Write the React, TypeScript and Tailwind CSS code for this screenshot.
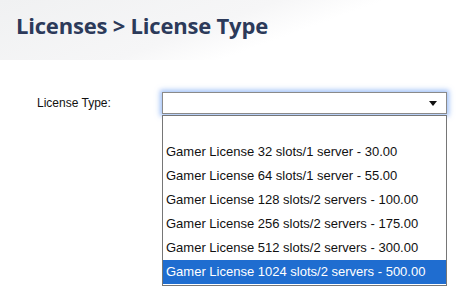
import { useState } from 'react'

const options = [
  '',
  'Gamer License 32 slots/1 server - 30.00',
  'Gamer License 64 slots/1 server - 55.00',
  'Gamer License 128 slots/2 servers - 100.00',
  'Gamer License 256 slots/2 servers - 175.00',
  'Gamer License 512 slots/2 servers - 300.00',
  'Gamer License 1024 slots/2 servers - 500.00',
]

const App = () => {
  const [active] = useState(6)

  return (
    <div className="relative h-[292px] w-[457px] overflow-hidden bg-white font-['Liberation_Sans',Arial,sans-serif]">
      {/* header band */}
      <div className="h-[60px] bg-[linear-gradient(160deg,#f0f1f2_0%,#f6f6f7_45%,#ffffff_62%,#ffffff_100%)] pl-4 pt-[7px]">
        <h1 className="font-['Open_Sans',sans-serif] text-[22px] font-bold leading-[36px] tracking-[-0.2px] text-[#2c3a5a]">
          Licenses &gt; License Type
        </h1>
      </div>

      {/* form row */}
      <div className="mt-[32px] flex items-center">
        <label className="w-[162px] pl-[37px] text-[12px] text-[#111]">License Type:</label>
        <div className="relative">
          <div className="flex h-[22px] w-[285px] items-center justify-end border border-[#8a8a8a] bg-white pr-[9px] shadow-[0_0_5px_2px_rgba(80,140,240,0.55)]">
            <svg width="8" height="5" viewBox="0 0 8 5">
              <path d="M0 0h8L4 5z" fill="#111" />
            </svg>
          </div>
          {/* open list */}
          <ul className="absolute left-0 top-[23px] w-[285px] border border-[#767676] bg-white pb-[1px] text-[13px] text-[#111]">
            {options.map((o, i) => (
              <li
                key={i}
                className={
                  i === active
                    ? 'h-[24px] bg-[#1f6dd0] pl-[3px] leading-[24px] text-white'
                    : 'h-[24px] pl-[3px] leading-[24px]'
                }
              >
                {o}
              </li>
            ))}
          </ul>
        </div>
      </div>
    </div>
  )
}

export default App
